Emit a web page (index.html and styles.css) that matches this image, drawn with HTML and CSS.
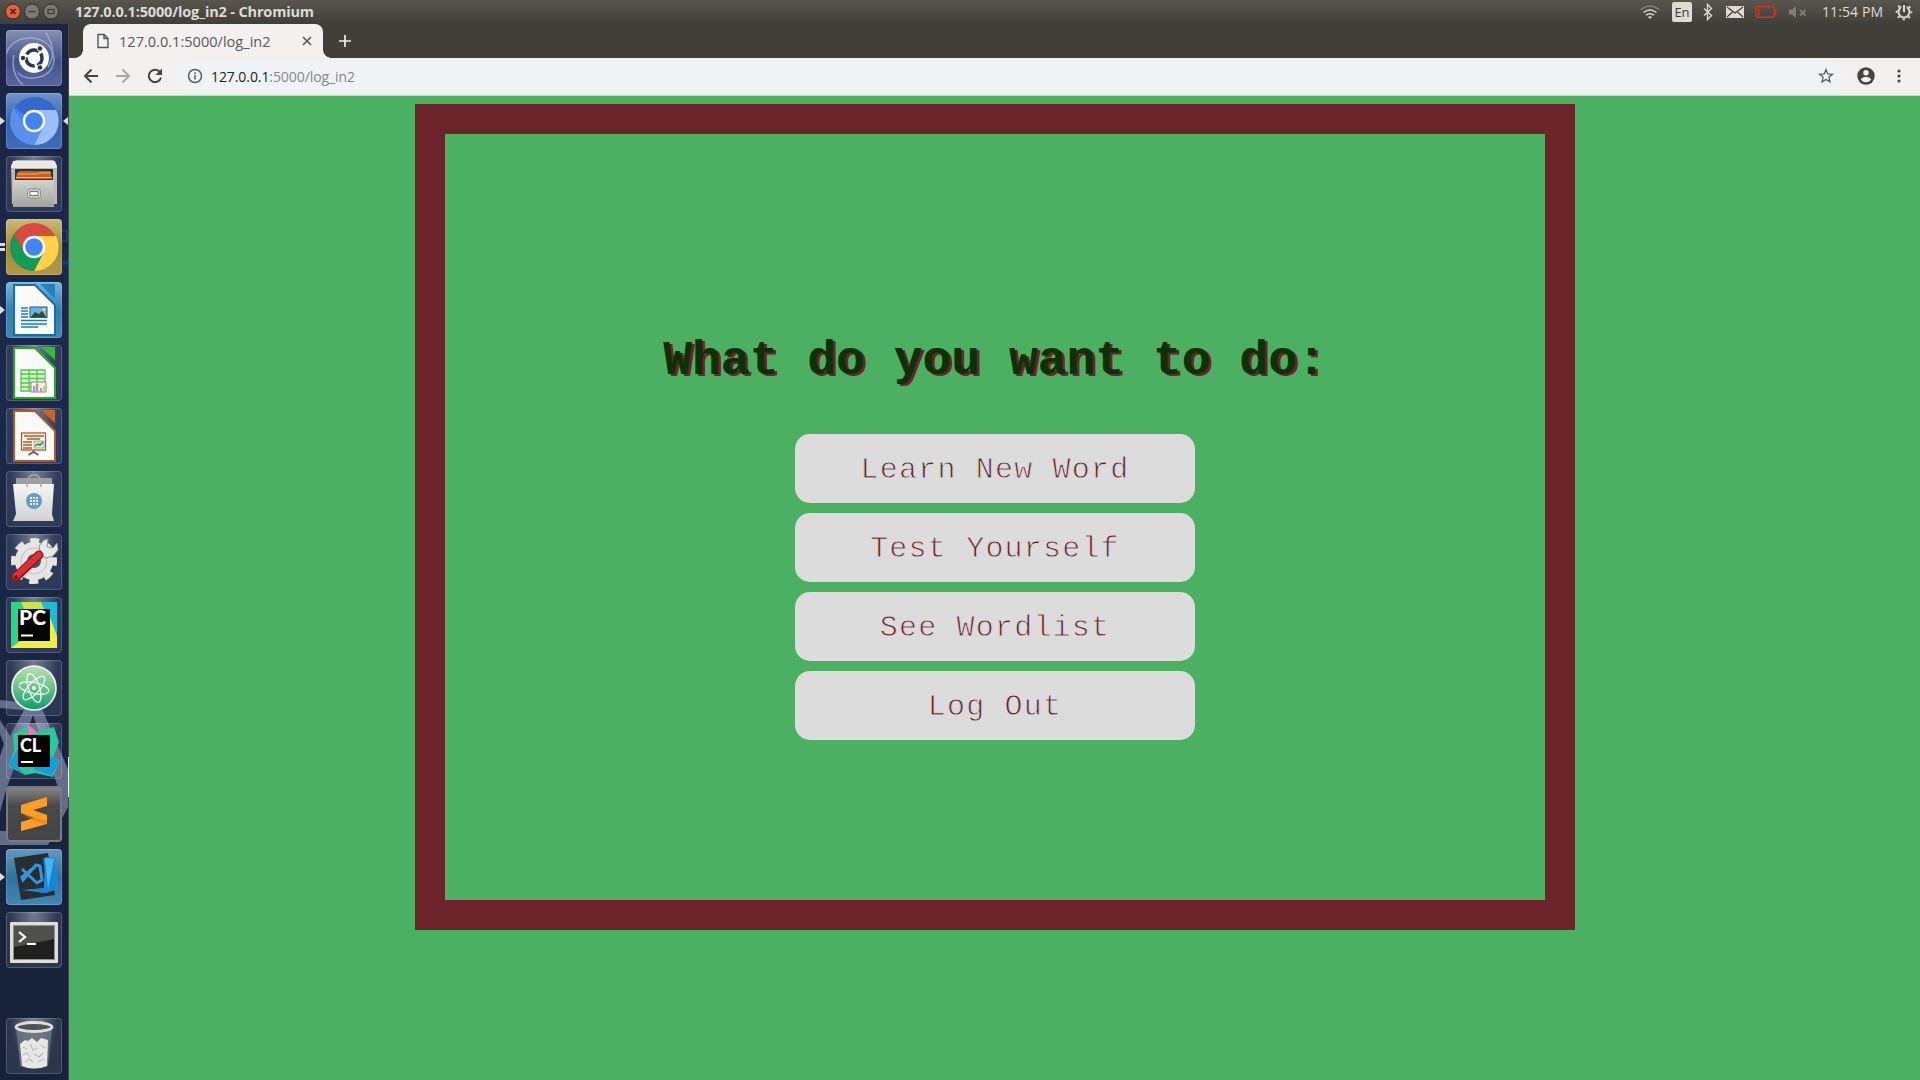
FILE: index.html
```html
<!DOCTYPE html>
<html lang="en">
<head>
<meta charset="utf-8">
<title>127.0.0.1:5000/log_in2</title>
<link rel="stylesheet" href="styles.css">
</head>
<body>
<div class="desktop">
  <header class="panel">
    <div class="win-buttons">
      <svg width="54" height="24" viewBox="0 0 54 24">
        <circle cx="8" cy="11.500" r="7.500" fill="#e9603a" stroke="#33322d"/>
        <path d="M5.500 9l5 5m0-5l-5 5" stroke="#46200f" stroke-width="1.500"/>
        <circle cx="27" cy="11.500" r="7.500" fill="#7b7971" stroke="#33322d"/>
        <path d="M23.500 11.500h7" stroke="#3b3a35" stroke-width="1.300"/>
        <circle cx="46" cy="11.500" r="7.500" fill="#7b7971" stroke="#33322d"/>
        <rect x="43" y="9.500" width="6" height="4" fill="none" stroke="#3b3a35" stroke-width="1.200"/>
      </svg>
    </div>
    <div class="win-title">127.0.0.1:5000/log_in2 - Chromium</div>
    <div class="indicators">
      <svg class="wifi" width="20" height="24" viewBox="0 0 20 24" fill="none" stroke="#dfdbd2" stroke-width="1.500">
        <path d="M.7 9.500q9.300-7 18.600 0" stroke="#87857d"/><path d="M3.500 12.500q6.500-5 13 0"/><path d="M6 15.200q4-3 8 0"/><path d="M8 17l2 2 2-2q-2-1.500-4 0z" fill="#dfdbd2" stroke="none"/>
      </svg>
      <span class="lang">En</span>
      <svg class="bt" width="10" height="24" viewBox="0 0 10 24" fill="none" stroke="#dfdbd2" stroke-width="1.400"><path d="M1 8.500l7.500 7-4 4V4.500l4 4-7.500 7"/></svg>
      <svg class="mail" width="18" height="24" viewBox="0 0 18 24"><rect y="6" width="18" height="12" fill="#dfdbd2"/><path d="M1 7l8 6 8-6M1 17l5.500-5M17 17l-5.500-5" fill="none" stroke="#3c3b37" stroke-width="1.100"/></svg>
      <svg class="batt" width="22" height="24" viewBox="0 0 22 24"><rect x=".75" y="6.750" width="18.500" height="10.500" rx="1" fill="none" stroke="#dd2e20" stroke-width="1.300"/><path d="M2.500 8.500h2v7h-2zM20 9h1.500v6h-1.500" fill="#dd2e20"/></svg>
      <svg class="vol" width="18" height="24" viewBox="0 0 18 24"><path d="M0 9.500h3l4-3.500v12l-4-3.500H0z" fill="#7f7d75"/><path d="M11 10l5.500 5.500m0-5.500L11 15.500" stroke="#7f7d75" stroke-width="2"/></svg>
      <span class="clock">11:54 PM</span>
      <svg class="gear" width="18" height="24" viewBox="0 0 18 24" fill="none" stroke="#dfdbd2"><circle cx="9" cy="12" r="5.500" stroke-width="2"/><circle cx="9" cy="12" r="7.400" stroke-width="1.800" stroke-dasharray="2.300 3.510" stroke-dashoffset="1"/><path d="M9 3v6" stroke="#45443e" stroke-width="5"/><path d="M9 5v7" stroke-width="2"/></svg>
    </div>
  </header>

  <div class="workspace">
    <nav class="launcher">
      <svg class="wallpaper" width="69" height="1056" viewBox="0 24 69 1056">
        <g fill="#8b94b4" opacity=".65"><path d="M0 700l30 3 12 6 26 60v38l-20 38H0v-14h42l8-8 9-33-26-75-27 75-6 22v-56l4-12-4-10v-14l10 16 14-26-24-2z"/></g>
        <path d="M68.500 757v40" stroke="#e9eaee"/>
        <g fill="none" stroke="#244785" stroke-width="2" opacity=".6"><path d="M62 231h5v10h-5M64 259v7m4-7v7m-4-3h4"/></g>
      </svg>
      <div class="tiles">
        <div class="tile dash"><svg viewBox="0 0 56 56"><g fill="none" stroke="#b5bedb" stroke-width="1.500" opacity=".65"><path d="M0 24Q5 9 23 8q22 0 25 20 0 18-20 20-10 1-16-5"/><path d="M17 55Q4 43 8 25M40 3q12 18 2 34"/></g><circle cx="28" cy="28" r="15" fill="#fff"/><circle cx="28" cy="28" r="8" fill="none" stroke="#29365f" stroke-width="3.500" stroke-dasharray="14.200 2.550" stroke-dashoffset="5"/><g fill="#29365f" stroke="#fff"><circle cx="17" cy="28" r="2.800"/><circle cx="34" cy="18.500" r="2.800"/><circle cx="34" cy="37.500" r="2.800"/></g></svg></div>
        <div class="tile chromium"><svg viewBox="0 0 56 56"><circle cx="28" cy="28" r="24" fill="#4b83ed"/><path d="M28 28L8.500 15A24 24 0 0 1 50 17H28z" fill="#3468c9"/><path d="M28 17h22a24 24 0 0 1-22 35l9-18z" fill="#9dbdf8"/><path d="M8 15a24 24 0 0 0 20 37l9-17-17 1z" fill="#5990ee"/><circle cx="28" cy="28" r="10" fill="#4384ef" stroke="#f2f5fb" stroke-width="2.500"/></svg><i class="pip left"></i><i class="pip right"></i></div>
        <div class="tile glass"><svg viewBox="0 0 56 56"><path d="M5 9l5-5h37l4 5v39H6z" fill="#b9b9b6"/><path d="M7 5h42l2 7H5z" fill="#e9e9e7"/><path d="M9 13h38v13H9z" fill="#35322d"/><path d="M11 17l3-2h30l2 8H10z" fill="#c95d25"/><path d="M11 18h20l2-1h12M10 21.500h36" fill="none" stroke="#f0bb71" stroke-width="1"/><path d="M7 24h41v27H7z" fill="url(#metal)"/><rect x="21.500" y="33" width="13" height="9" rx="2.500" fill="#d4d4d1" stroke="#8e8e8a"/><rect x="24" y="35.500" width="8" height="4" fill="#fff" stroke="#767671"/></svg></div>
        <div class="tile chrome"><svg viewBox="0 0 56 56"><circle cx="28" cy="28" r="24" fill="#d94b3e"/><path d="M28 17h22a24 24 0 0 1-22 35l9-18z" fill="#ffd148"/><path d="M8 15a24 24 0 0 0 20 37l9-17-17 1z" fill="#159b58"/><circle cx="28" cy="28" r="10" fill="#4286f4" stroke="#f5f5f5" stroke-width="2.500"/></svg><i class="pips"></i></div>
        <div class="tile writer"><svg viewBox="0 0 56 56"><path d="M8 3h21l20 20v30H8z" fill="#fafafa" stroke="#146fad" stroke-width="2"/><path d="M34 2h15v15z" fill="#2582bd"/><path d="M15 26h7M15 29h7M15 32h7M15 35h7M15 38.500h26M15 42h26M15 45h17" stroke="#1680bf" stroke-width="1.500"/><rect x="24" y="25" width="17" height="10.500" fill="#67b7e8" stroke="#26577b"/><path d="M25 35l4-5 4 2 3-3 4 6z" fill="#354835"/><circle cx="38" cy="27.500" r="1.500" fill="#ece845"/></svg><i class="pip left"></i></div>
        <div class="tile glass"><svg viewBox="0 0 56 56"><path d="M8 3h21l20 20v30H8z" fill="#fafafa" stroke="#25ac1d" stroke-width="2"/><path d="M35 2h14v13z" fill="#39bd30"/><path d="M15 25h24v21H15z" fill="#d8f5d3"/><path d="M15 25h24v21H15zM15 29h24M15 33.500h24M15 38h24M15 42h24M23 25v21M31 25v21" fill="none" stroke="#57c64c" stroke-width="1.300"/><path d="M25 37h15v10H25z" fill="#f2f2f2" stroke="#888"/><path d="M28 41v6M35 43v4" stroke="#70afe0" stroke-width="2"/><path d="M31 38.500v8" stroke="#eb8660" stroke-width="2.500"/><path d="M38 41v6" stroke="#d5d83c" stroke-width="2"/></svg></div>
        <div class="tile glass"><svg viewBox="0 0 56 56"><path d="M8 3h21l20 20v30H8z" fill="#fafafa" stroke="#bd5520" stroke-width="2"/><path d="M35 2h14v13z" fill="#c9652c"/><rect x="15.500" y="25" width="24" height="17" fill="#fff8f1" stroke="#bd5520" stroke-width="1.300"/><path d="M18 28h20M21 31h13M17 34h9M17 37h9M17 40h9" stroke="#bd5520" stroke-width="1.500"/><path d="M28 33h10v7H28z" fill="#ddd" stroke="#aaa"/><path d="M29 38l3-2 2 1 3-3" fill="none" stroke="#269434" stroke-width="1.500"/><path d="M27.500 42v2l-5 3m5-3l5 3" fill="none" stroke="#555" stroke-width="1.500"/></svg></div>
        <div class="tile glass"><svg viewBox="0 0 56 56"><path d="M10 7h36v7H10z" fill="#9b9f9e"/><path d="M7 13h41l-2 30 2 7H7l3-7z" fill="url(#paper)"/><path d="M21 16v-5q1-7 7-7t7 7v5" fill="none" stroke="#a6aaa9" stroke-width="1.500"/><circle cx="28" cy="30" r="8" fill="#6a9acc"/><path d="M24 27h8M24 30h8M24 33h8" stroke="#edf4fb" stroke-width="2" stroke-dasharray="2 1"/></svg></div>
        <div class="tile glass"><svg viewBox="0 0 56 56"><circle cx="28" cy="27" r="13" fill="none" stroke="#e5e5e4" stroke-width="12"/><circle cx="28" cy="27" r="20.500" fill="none" stroke="#e5e5e4" stroke-width="5" stroke-dasharray="9.100 7" stroke-dashoffset="4.500"/><circle cx="28" cy="27" r="13" fill="none" stroke="#bfc0c0"/><path d="M35 21l-2-9 5-6 4-1-1 8 6 1 4-5 1 7-5 6-7 2z" fill="#e8e8e7" stroke="#949494"/><path d="M10 43l23-22" stroke="#9c181c" stroke-width="9" stroke-linecap="round"/><path d="M10 42l23-21" stroke="#dc3234" stroke-width="6" stroke-linecap="round"/><circle cx="10" cy="43" r="1.700" fill="#5b1616"/></svg></div>
        <div class="tile glass"><svg viewBox="0 0 56 56"><path d="M5 5h46v46H5z" fill="#29d688"/><path d="M15 5h20l3 7H18z" fill="#c9e645"/><path d="M35 5h16v34L40 16z" fill="#20b9dc"/><path d="M5 51l15-12 24-19 7 19v12z" fill="#f2ed43"/><rect x="12" y="12" width="32" height="32" fill="#050505"/><text x="13" y="27.500" class="pc">PC</text><path d="M15 38.500h12" stroke="#fff" stroke-width="2"/></svg></div>
        <div class="tile glass"><svg viewBox="0 0 56 56"><circle cx="28" cy="28" r="22" fill="url(#atom)" stroke="#f3f3f0" stroke-width="1.700"/><g fill="none" stroke="#eafaf1" stroke-width="1.400"><ellipse cx="28" cy="28" rx="15" ry="5.500" transform="rotate(12 28 28)"/><ellipse cx="28" cy="28" rx="15" ry="5.500" transform="rotate(72 28 28)"/><ellipse cx="28" cy="28" rx="15" ry="5.500" transform="rotate(132 28 28)"/></g><circle cx="28" cy="28" r="2" fill="#fff"/></svg></div>
        <div class="tile glass"><svg viewBox="0 0 56 56"><path d="M7 12l15-10 9 7 17-5 5 15-6 16 7 2-7 17-18-4-10 2-17-9 6-15z" fill="#2bc79d"/><path d="M22 2l9 7-9 5z" fill="#e978b4"/><path d="M2 42l10-16v18l6 7zM45 34l9 3-8 16-19-7z" fill="#159fd8"/><rect x="12" y="12" width="32" height="32" fill="#050505"/><text x="14" y="29" class="cl">CL</text><path d="M15 39h12" stroke="#fff" stroke-width="2"/></svg></div>
        <div class="tile sublime"><svg viewBox="0 0 56 56"><path d="M15 19l26-8v9l-14 4 14 5v9l-26 7v-9l13-4-13-5z" fill="#ff9c28"/><path d="M15 27l26 8v3l-13-3z" fill="#d57710" opacity=".5"/></svg></div>
        <div class="tile vscode"><svg viewBox="0 0 56 56"><path d="M8 9l34-5 7 42-34 5z" fill="#282d30"/><path d="M39 8l10 1 3 31-12 4-24-3 22-2z" fill="#268bd5"/><path d="M37 9l4 30-22 2 20 3 12-5-3-29z" fill="#1687d5"/><path d="M39 9l9 1-6 30z" fill="#49b4f2"/><path d="M16 20l15 14 5-3-2-14-4-1-13 15-1-3 13-10" fill="none" stroke="#3595da" stroke-width="3"/></svg><i class="pip left"></i></div>
        <div class="tile glass"><svg viewBox="0 0 56 56"><rect x="4" y="10" width="48" height="41" rx="1" fill="#dededb"/><rect x="7.500" y="13.500" width="41" height="34" fill="#20211f" stroke="#8d8d89"/><path d="M8 14h40v13L8 35z" fill="#50514e"/><path d="M13 20l6 5-6 5M21 32h9" fill="none" stroke="#fff" stroke-width="2.200"/></svg></div>
      </div>
      <div class="tile glass"><svg viewBox="0 0 56 56"><path d="M10 10l4 38q14 5 28 0l4-38z" fill="#7b828f" opacity=".65"/><path d="M14 26l5-4 3 1 4-3 5 4 4-4 7 2-1 26q-13 5-25 0z" fill="#e7e7e4"/><path d="M17 29l4 2M24 26l3 6 4-2M35 27l4 3M17 37l4-2 3 4M28 36l5 3 4-4M19 44l5-3 3 4M32 44l6-3" fill="none" stroke="#b9bcbb" stroke-width="1.100"/><ellipse cx="28" cy="9" rx="18" ry="4.500" fill="#4c535b" stroke="#dedfdb" stroke-width="2.800"/></svg></div>
      <svg class="defs" width="0" height="0"><defs><linearGradient id="metal" x2="0" y2="1"><stop stop-color="#d2d2cf"/><stop offset="1" stop-color="#a3a3a0"/></linearGradient><linearGradient id="paper" x2="0" y2="1"><stop stop-color="#f6f6f4"/><stop offset="1" stop-color="#cfd2d0"/></linearGradient><linearGradient id="atom" x2="0" y2="1"><stop stop-color="#bce4ab"/><stop offset="1" stop-color="#119d69"/></linearGradient></defs></svg>
    </nav>

    <main class="browser">
      <div class="tabs">
        <div class="tab">
          <svg class="doc" width="12" height="16" viewBox="0 0 12 16" fill="none" stroke="#55565a" stroke-width="1.400"><path d="M1 1.500h6l4 4v9H1zM7 1.500v4h4"/></svg>
          <span class="tab-title">127.0.0.1:5000/log_in2</span>
          <svg class="close" width="10" height="10" viewBox="0 0 10 10"><path d="M1 1l8 8m0-8L1 9" stroke="#55565a" stroke-width="1.600"/></svg>
        </div>
        <svg class="new-tab" width="12" height="12" viewBox="0 0 12 12"><path d="M6 0v12M0 6h12" stroke="#ecebe8" stroke-width="1.700"/></svg>
      </div>
      <div class="toolbar">
        <svg class="nav" width="16" height="16" viewBox="0 0 16 16" fill="none" stroke="#454545" stroke-width="2"><path d="M15 8H2M8.500 1.500L2 8l6.500 6.500"/></svg>
        <svg class="nav" width="16" height="16" viewBox="0 0 16 16" fill="none" stroke="#a8a8a8" stroke-width="2"><path d="M1 8h13M7.500 1.500L14 8l-6.500 6.500"/></svg>
        <svg class="nav" width="16" height="16" viewBox="0 0 16 16"><path d="M13 4.200A6.200 6.200 0 1 0 14 9.500" fill="none" stroke="#454545" stroke-width="2"/><path d="M15 .5v6.500H8.500z" fill="#454545"/></svg>
        <div class="address">
          <svg width="16" height="16" viewBox="0 0 16 16"><circle cx="8" cy="8" r="6.500" fill="none" stroke="#5d6064" stroke-width="1.500"/><path d="M8 7v4.500M8 4.300v1.700" stroke="#5d6064" stroke-width="1.600"/></svg>
          <span class="url"><b>127.0.0.1</b>:5000/log_in2</span>
          <svg class="star" width="16" height="16" viewBox="0 0 16 16"><path d="M8 1.700l1.800 4.200 4.600.4-3.500 3 1.100 4.500L8 11.400l-4 2.400 1.100-4.500-3.500-3 4.600-.4z" fill="none" stroke="#55595d" stroke-width="1.300"/></svg>
        </div>
        <svg class="user" width="18" height="18" viewBox="0 0 18 18"><circle cx="9" cy="9" r="8.700" fill="#454545"/><circle cx="9" cy="5.800" r="2.700" fill="#f2f1ef"/><path d="M3.700 12.300Q5.500 9.700 9 9.700t5.300 2.600Q12.500 15.300 9 15.300t-5.300-3z" fill="#f2f1ef"/></svg>
        <svg class="menu" width="4" height="14" viewBox="0 0 4 14" fill="#454545"><circle cx="2" cy="2" r="1.600"/><circle cx="2" cy="7" r="1.600"/><circle cx="2" cy="12" r="1.600"/></svg>
      </div>
      <div class="page">
        <section class="frame">
          <h1>What do you want to do:</h1>
          <button>Learn New Word</button>
          <button>Test Yourself</button>
          <button>See Wordlist</button>
          <button>Log Out</button>
        </section>
      </div>
    </main>
  </div>
</div>
</body>
</html>
```
FILE: styles.css
```css
* { box-sizing: border-box; }
body { margin: 0; overflow: hidden; font-family: "Open Sans", "Noto Sans", sans-serif; }
svg { display: block; flex: none; }
.desktop { width: 1920px; height: 1080px; display: flex; flex-direction: column; }
.panel { height: 24px; display: flex; align-items: center; background: linear-gradient(#5b574b 0, #55534b 2px, #403f3a 24px); color: #dfdbd2; }
.win-buttons { margin-left: 5px; width: 54px; }
.win-title { margin-left: 16px; font-size: 14.500px; font-weight: 700; letter-spacing: -.16px; white-space: nowrap; line-height: 24px; }
.indicators { margin-left: auto; display: flex; align-items: center; height: 24px; padding-right: 7px; }
.lang { margin-left: 12px; width: 20px; height: 20px; border-radius: 2px; background: #dfdbd2; color: #3c3b37; font-size: 13px; line-height: 21px; text-align: center; }
.bt { margin-left: 11px; }
.mail { margin-left: 13px; }
.batt { margin-left: 11px; }
.vol { margin-left: 12px; }
.clock { margin-left: 15px; width: 60px; font-size: 14px; letter-spacing: .1px; line-height: 24px; white-space: nowrap; }
.gear { margin-left: 13px; }
.workspace { flex: 1; display: flex; min-height: 0; }

.launcher { position: relative; width: 69px; padding: 6px 0 6px 6px; display: flex; flex-direction: column; justify-content: space-between; background: linear-gradient(#1b2443, #1b294b 30%, #192541 65%, #172238); border-right: 1px solid #44464f; }
.wallpaper { position: absolute; left: 0; top: 0; }
.defs { position: absolute; }
.tiles { display: flex; flex-direction: column; gap: 7px; }
.tile { position: relative; width: 56px; height: 56px; border-radius: 4px; box-shadow: inset 0 0 0 1px rgba(255,255,255,.18); }
.tile svg { width: 56px; height: 56px; }
.glass { background: radial-gradient(ellipse at 50% 0, rgba(195,200,220,.55), rgba(130,140,165,.2) 60%, rgba(130,140,165,.17)); }
.dash { background: linear-gradient(#8490b4, #42548b 55%, #5966a0); }
.chromium { background: linear-gradient(#7095c7, #3564ad 50%, #3e6db9); }
.chrome { background: linear-gradient(#c9bb79, #a28b38 50%, #b09849); }
.writer { background: linear-gradient(#73b5df, #367fae 50%, #4286b2); }
.sublime { background: linear-gradient(#8a8a89, #4a4a4a 35%, #434343); box-shadow: inset 0 0 0 2px #767987; }
.vscode { background: linear-gradient(#6499bf, #31719c 50%, #4386b4); }
.pip { position: absolute; top: 24px; border: 4.500px solid transparent; }
.pip.left { left: -6px; border-left: 5px solid #deded9; border-right: 0; }
.pip.right { right: -6px; border-right: 5px solid #deded9; border-left: 0; }
.pips { position: absolute; left: -6px; top: 24px; width: 5px; height: 8px; border-top: 3px solid #deded9; border-bottom: 3px solid #deded9; }
.pc, .cl { font: 900 18px Lato, sans-serif; fill: #fff; }
.pc { font-size: 21px; }

.browser { flex: 1; display: flex; flex-direction: column; }
.tabs { height: 34px; padding-left: 14px; display: flex; align-items: center; background: #403f3a; }
.tab { position: relative; width: 240px; height: 34px; padding: 0 11px 0 14px; display: flex; align-items: center; background: #f2f1ef; border-radius: 8px 8px 0 0; color: #57585b; }
.tab::before, .tab::after { content: ""; position: absolute; bottom: 0; width: 8px; height: 8px; }
.tab::before { left: -8px; background: radial-gradient(circle at 0 0, transparent 7.500px, #f2f1ef 8px); }
.tab::after { right: -8px; background: radial-gradient(circle at 100% 0, transparent 7.500px, #f2f1ef 8px); }
.tab-title { margin-left: 10px; font-size: 14.500px; letter-spacing: .03px; white-space: nowrap; }
.close { margin-left: auto; }
.new-tab { margin-left: 16px; }
.toolbar { height: 38px; padding: 0 23px 1px 14px; display: flex; align-items: center; background: #f2f1ef; border-bottom: 1px solid #d0cfcc; }
.nav { margin-right: 16px; }
.address { flex: 1; height: 28px; margin-left: -2px; padding: 0 9px 0 10px; display: flex; align-items: center; background: #eff3f5; border-radius: 14px; }
.url { margin-left: 8px; font-size: 14px; letter-spacing: -.08px; color: #85878b; white-space: nowrap; }
.url b { font-weight: 400; color: #222326; }
.star { margin-left: auto; }
.user { margin-left: 14px; }
.menu { margin-left: 22px; margin-right: -4px; }

.page { flex: 1; padding-top: 8px; background: #4bb062; }
.frame { width: 1160px; height: 826px; margin: 0 auto; border: 30px solid #6c2329; padding-top: 200px; display: flex; flex-direction: column; align-items: center; font-family: "Liberation Mono", "Courier New", monospace; }
.frame h1 { margin: 0 0 46px; font-size: 48px; line-height: 54px; color: #0b3204; text-shadow: 3px 2px #6c2329; }
.frame button { width: 400px; height: 69px; margin-bottom: 10px; padding: 2px 0 0 1px; border: 0; border-radius: 15px; background: #dcdcdc; color: #6c2329; font: 30px/36px "Liberation Mono", "Courier New", monospace; letter-spacing: 1.200px; -webkit-text-stroke: .9px #dcdcdc; }
```
